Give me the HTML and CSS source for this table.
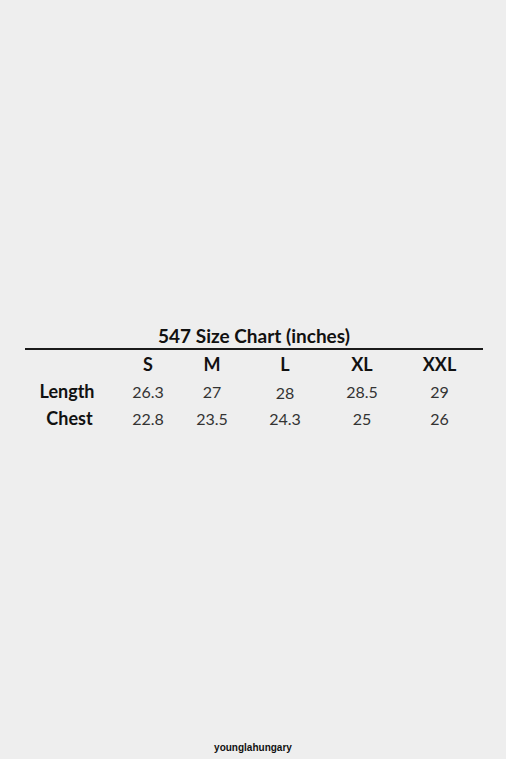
FILE: index.html
```html
<!DOCTYPE html>
<html>
<head>
<meta charset="utf-8">
<link rel="stylesheet" href="styles.css">
</head>
<body>
<main class="page">
  <section class="chart">
    <h1 class="title">547 Size Chart (inches)</h1>
    <div class="grid">
      <div class="cell"></div>
      <div class="cell head">S</div>
      <div class="cell head">M</div>
      <div class="cell head">L</div>
      <div class="cell head">XL</div>
      <div class="cell head">XXL</div>

      <div class="cell label">Length</div>
      <div class="cell val">26.3</div>
      <div class="cell val">27</div>
      <div class="cell val low">28</div>
      <div class="cell val">28.5</div>
      <div class="cell val">29</div>

      <div class="cell label chest">Chest</div>
      <div class="cell val">22.8</div>
      <div class="cell val">23.5</div>
      <div class="cell val">24.3</div>
      <div class="cell val">25</div>
      <div class="cell val">26</div>
    </div>
  </section>
  <footer class="footer">younglahungary</footer>
</main>
</body>
</html>
```
FILE: styles.css
```css
html, body {
  margin: 0;
  padding: 0;
  background: #eeeeee;
}
.page {
  height: 759px;
  display: flex;
  flex-direction: column;
  font-family: Lato, "Open Sans", sans-serif;
}
.chart {
  padding-top: 324px;
  padding-left: 25px;
  width: 458px;
}
.title {
  margin: 0;
  font-size: 19px;
  line-height: 24px;
  font-weight: 700;
  text-align: center;
  color: #111;
  border-bottom: 2px solid #1a1a1a;
}
.grid {
  display: grid;
  grid-template-columns: 87px 72px 56px 90px 64px 91px;
  grid-auto-rows: 27px;
  padding-top: 1px;
}
.cell {
  text-align: center;
  line-height: 27px;
}
.head {
  font-weight: 700;
  font-size: 18px;
  color: #111;
}
.label {
  font-weight: 700;
  font-size: 18px;
  color: #111;
  padding-right: 3px;
}
.chest {
  padding-left: 2px;
  padding-right: 0;
}
.val {
  font-size: 16px;
  color: #333;
}
.low {
  padding-top: 2px;
  line-height: 25px;
}
.footer {
  margin-top: auto;
  text-align: center;
  font-family: "Liberation Sans", Arial, sans-serif;
  font-weight: 700;
  font-size: 10px;
  line-height: 12px;
  color: #111;
  padding-bottom: 5px;
}
```
